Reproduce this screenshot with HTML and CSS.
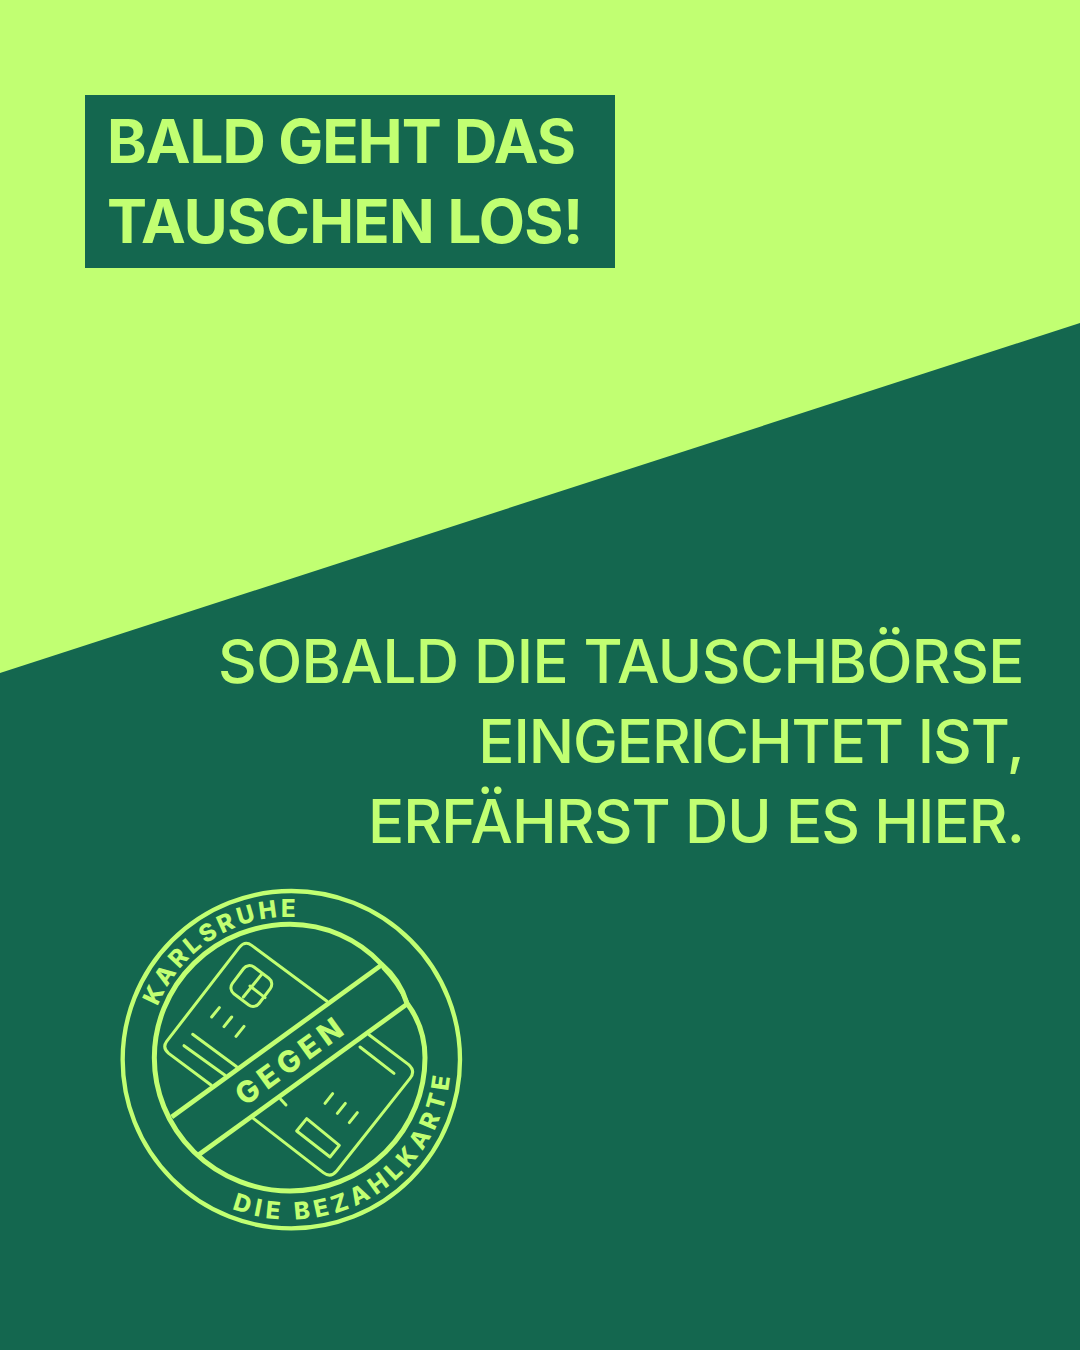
FILE: index.html
```html
<!DOCTYPE html>
<html lang="de">
<head>
<meta charset="utf-8">
<title>Bald geht das Tauschen los</title>
<link rel="stylesheet" href="styles.css">
</head>
<body>
<main class="page">
  <div class="wedge"></div>
  <h1 class="headline"><span class="head-a">BALD GEHT DAS</span><br>TAUSCHEN LOS!</h1>
  <p class="message"><span class="line-a">SOBALD DIE TAUSCHBÖRSE</span><br><span class="line-b">EINGERICHTET IST,</span><br><span class="line-c">ERFÄHRST DU ES HIER.</span></p>
  <svg class="badge" viewBox="0 0 1080 1080" width="360" height="360" aria-label="Karlsruhe gegen die Bezahlkarte">
    <defs>
      <path id="arcTop" d="M 143 377 A 427 427 0 0 1 640 119"/>
      <path id="arcBottom" d="M 366 983 A 482 482 0 0 0 1022 560"/>
    </defs>
    <g class="ring">
      <circle class="outer" cx="544" cy="536" r="506"/>
      <path class="inner" d="M 133 530 A 407 400 0 0 1 540 130 A 375 375 0 0 1 815 250 A 240 240 0 0 1 890 365 A 275 275 0 0 1 945 530 A 405 400 0 0 1 540 930 A 407 400 0 0 1 133 530 Z"/>
      <path class="thick" d="M 810 243 Q 868 292 897 362 L 885 365 Q 860 310 815 264 Z"/>
    </g>
    <g class="lines">
      <path class="band" d="M 185 708 L 812 254"/>
      <path class="band" d="M 265 822 L 893 368"/>
      <path d="M 650 360 L 425 193 Q 405 178 388 199 L 170 481 Q 156 500 176 517 L 303 612"/>
      <rect x="-50" y="-50" width="100" height="100" rx="22" transform="translate(424 315) rotate(37)"/>
      <path d="M 455 280 L 400 348 M 420 315 L 465 350"/>
      <path d="M 305 408 L 328 380 M 342 437 L 365 408 M 378 466 L 402 436"/>
      <path d="M 248 460 L 380 557 M 222 494 L 345 583"/>
      <path d="M 778 462 L 895 550 Q 918 570 900 592 L 680 870 Q 662 892 640 875 L 430 712"/>
      <path d="M 512 655 L 528 672"/>
      <path d="M 750 498 L 852 577"/>
      <path d="M 645 667 L 668 638 M 682 697 L 706 667 M 718 725 L 742 695"/>
      <path d="M 560 750 L 590 713 L 688 793 L 660 828 Z"/>
    </g>
    <text class="ringtext top"><textPath href="#arcTop">KARLSRUHE</textPath></text>
    <text class="ringtext bottom"><textPath href="#arcBottom">DIE BEZAHLKARTE</textPath></text>
    <text class="gegen" transform="translate(543 537) rotate(-36)" text-anchor="middle" y="32">GEGEN</text>
  </svg>
</main>
</body>
</html>
```
FILE: styles.css
```css
* { box-sizing: border-box; }
html, body { margin: 0; padding: 0; }
body { background: #c1ff72; }
.page {
  position: relative;
  width: 1080px;
  height: 1350px;
  overflow: hidden;
  background: #c1ff72;
  display: flex;
  flex-direction: column;
  font-family: Inter, "Liberation Sans", sans-serif;
  color: #c1ff72;
}
.wedge {
  position: absolute;
  inset: 0;
  background: #14674f;
  clip-path: polygon(0 673px, 1080px 323px, 1080px 1350px, 0 1350px);
}
.headline {
  position: relative;
  align-self: flex-start;
  width: 530px;
  height: 173px;
  margin: 95px 0 0 85px;
  padding: 6px 0 0 22px;
  background: #14674f;
  font-size: 60px;
  font-weight: 650;
  line-height: 80px;
  letter-spacing: -0.75px;
  white-space: nowrap;
}
.head-a { letter-spacing: -0.95px; }
.message {
  position: relative;
  margin: 353px 56px 0 0;
  font-size: 60px;
  font-weight: 500;
  line-height: 80px;
  text-align: right;
  white-space: nowrap;
}
.line-a { letter-spacing: -0.55px; }
.line-b { letter-spacing: -1.07px; }
.line-c { letter-spacing: -0.9px; }
.badge {
  position: relative;
  display: block;
  margin: 20px 0 0 110px;
  flex: none;
}
.ring circle, .ring .inner { fill: none; stroke: #c1ff72; }
.outer { stroke-width: 13; }
.ring .inner { stroke-width: 15; }
.thick { fill: #c1ff72; }
.lines path, .lines rect {
  fill: none;
  stroke: #c1ff72;
  stroke-width: 9;
  stroke-linecap: round;
  stroke-linejoin: round;
}
.lines .band { stroke-width: 14; stroke-linecap: butt; }
.ringtext {
  font-family: Inter, "Liberation Sans", sans-serif;
  font-size: 72px;
  font-weight: 800;
  fill: #c1ff72;
}
.ringtext.top { letter-spacing: 10.5px; }
.ringtext.bottom { letter-spacing: 15px; }
.gegen {
  font-family: Inter, "Liberation Sans", sans-serif;
  font-size: 90px;
  font-weight: 800;
  letter-spacing: 15px;
  fill: #c1ff72;
}
```
